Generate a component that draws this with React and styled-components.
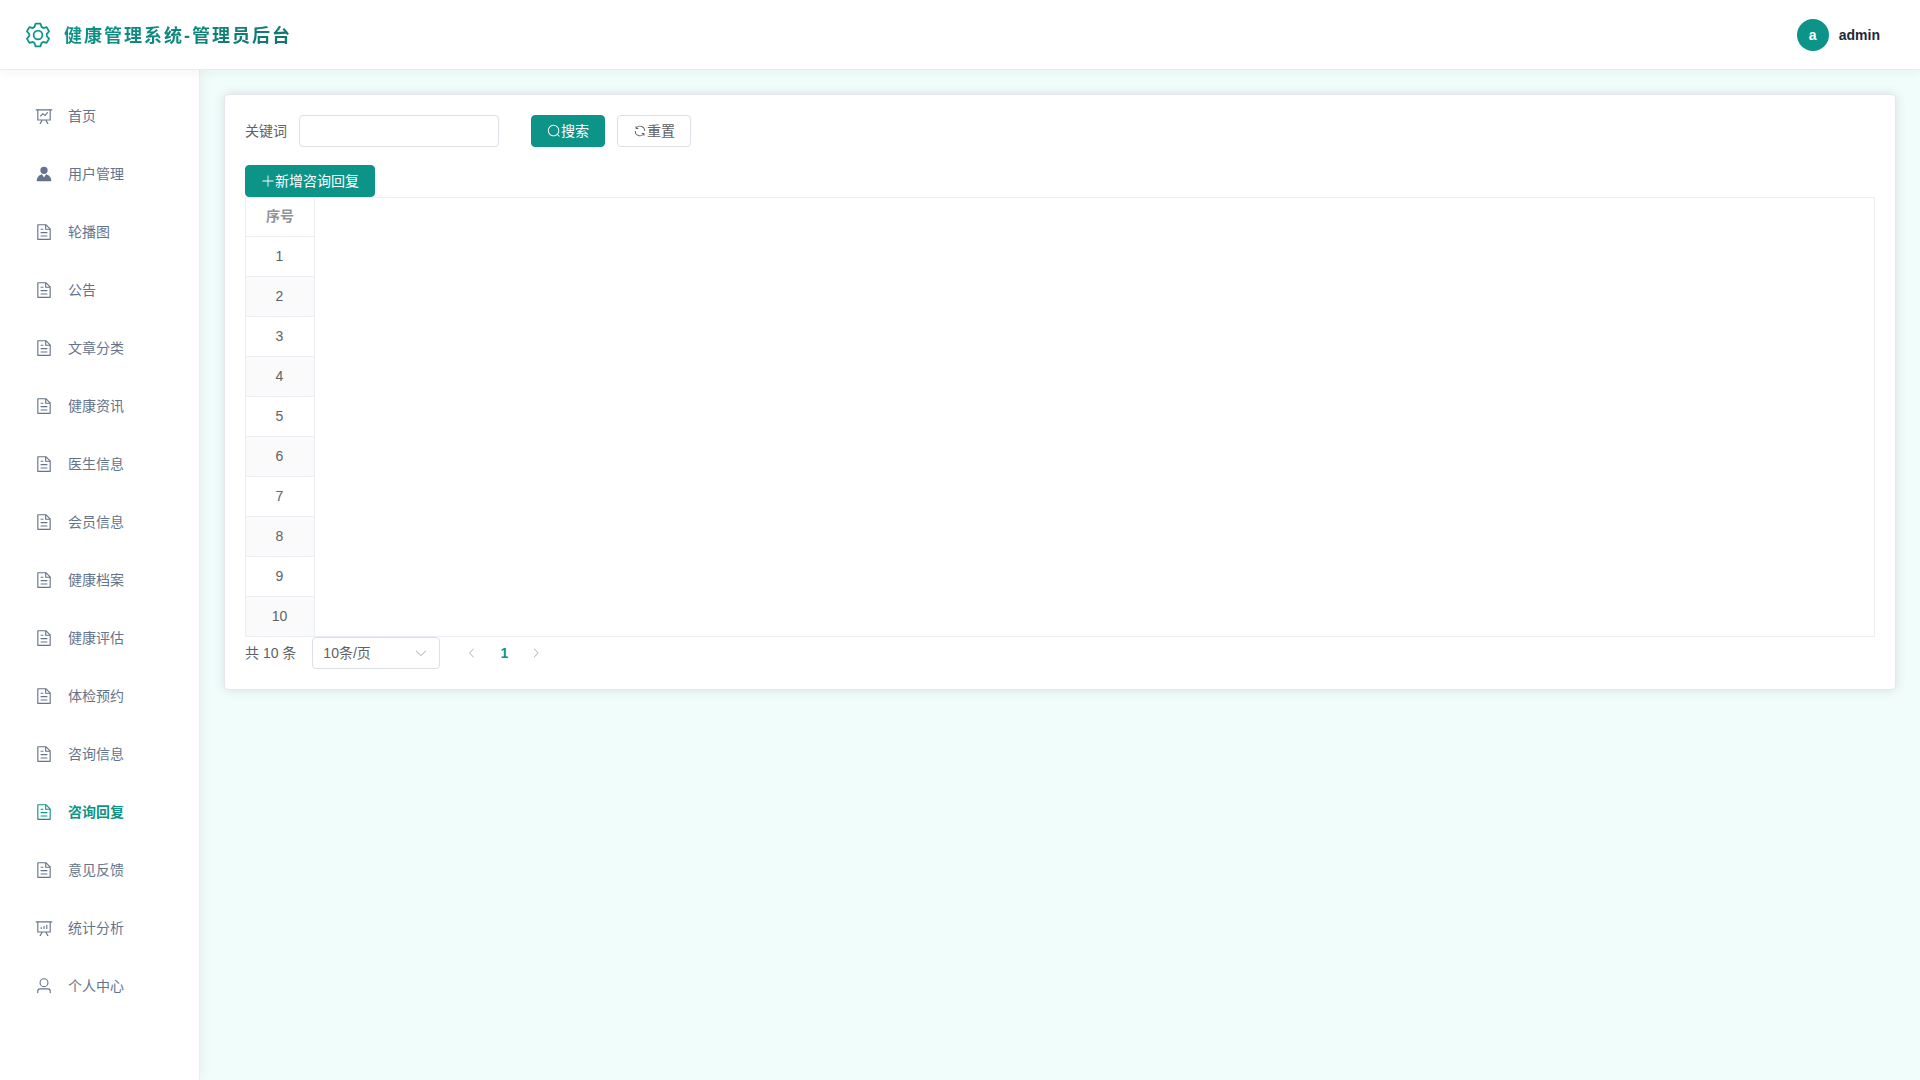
import React, { useState } from "react";
import styled, { createGlobalStyle } from "styled-components";

const GlobalStyle = createGlobalStyle`
  *, *::before, *::after { box-sizing: border-box; }
  body {
    margin: 0;
    font-family: "Liberation Sans", "Noto Sans CJK SC", sans-serif;
    font-size: 14px;
    line-height: 20px;
    color: #606266;
    background: #f0fdfa;
  }
  button, input, select { font: inherit; color: inherit; }
`;

const icons = {
  setting:
    "M600.704 64a32 32 0 0 1 30.464 22.208l35.2 109.376c14.784 7.232 28.928 15.36 42.432 24.512l112.384-24.192a32 32 0 0 1 34.432 15.36L944.32 364.8a32 32 0 0 1-4.032 37.504l-77.12 85.12a357.12 357.12 0 0 1 0 49.024l77.12 85.248a32 32 0 0 1 4.032 37.504l-88.704 153.6a32 32 0 0 1-34.432 15.296L708.8 803.904c-13.44 9.088-27.648 17.28-42.368 24.512l-35.264 109.376A32 32 0 0 1 600.704 960H423.296a32 32 0 0 1-30.464-22.208L357.696 828.48a351.616 351.616 0 0 1-42.56-24.64l-112.32 24.256a32 32 0 0 1-34.432-15.36L79.68 659.2a32 32 0 0 1 4.032-37.504l77.12-85.248a357.12 357.12 0 0 1 0-48.896l-77.12-85.248A32 32 0 0 1 79.68 364.8l88.704-153.6a32 32 0 0 1 34.432-15.296l112.32 24.256c13.568-9.152 27.776-17.408 42.56-24.64l35.2-109.312A32 32 0 0 1 423.232 64H600.64zm-23.424 64H446.72l-36.352 113.088-24.512 11.968a294.113 294.113 0 0 0-34.816 20.096l-22.656 15.36-116.224-25.088-65.28 113.152 79.68 88.192-1.92 27.136a293.12 293.12 0 0 0 0 40.192l1.92 27.136-79.808 88.192 65.344 113.152 116.224-25.024 22.656 15.296a294.113 294.113 0 0 0 34.816 20.096l24.512 11.968L446.72 896h130.688l36.48-113.152 24.448-11.904a288.282 288.282 0 0 0 34.752-20.096l22.592-15.296 116.288 25.024 65.28-113.152-79.744-88.192 1.92-27.136a293.12 293.12 0 0 0 0-40.256l-1.92-27.136 79.808-88.128-65.344-113.152-116.288 24.96-22.592-15.232a287.616 287.616 0 0 0-34.752-20.096l-24.448-11.904L577.344 128zM512 320a192 192 0 1 1 0 384 192 192 0 0 1 0-384zm0 64a128 128 0 1 0 0 256 128 128 0 0 0 0-256z",
  dataLine:
    "M359.168 768H160a32 32 0 0 1-32-32V192H64a32 32 0 0 1 0-64h896a32 32 0 1 1 0 64h-64v544a32 32 0 0 1-32 32H665.216l110.848 192h-74.88L590.336 768H433.664L322.816 960h-74.88l110.848-192zM832 192H192v512h640V192zM342.656 534.656a32 32 0 1 1-45.312-45.312L444.992 341.76l125.44 94.08L679.04 300.032a32 32 0 1 1 49.92 39.936L581.632 524.224 451.008 426.24 342.656 534.592z",
  avatar:
    "M628.736 528.896A416 416 0 0 1 928 928H96a415.872 415.872 0 0 1 299.264-399.104L512 704l116.736-175.104zM720 304a208 208 0 1 1-416 0 208 208 0 0 1 416 0z",
  document:
    "M832 384H576V128H192v768h640V384zm-26.496-64L640 154.496V320h165.504zM160 64h480l256 256v608a32 32 0 0 1-32 32H160a32 32 0 0 1-32-32V96a32 32 0 0 1 32-32zm160 448h384v64H320v-64zm0-192h160v64H320v-64zm0 384h384v64H320v-64z",
  dataAnalysis:
    "m665.216 768 110.848 192h-74.88L590.336 768H433.6L322.752 960H247.936l110.848-192H160a32 32 0 0 1-32-32V192H64a32 32 0 0 1 0-64h896a32 32 0 1 1 0 64h-64v544a32 32 0 0 1-32 32H665.216zM832 192H192v512h640V192zM352 448a32 32 0 0 1 32 32v64a32 32 0 0 1-64 0v-64a32 32 0 0 1 32-32zm160-64a32 32 0 0 1 32 32v128a32 32 0 0 1-64 0V416a32 32 0 0 1 32-32zm160-64a32 32 0 0 1 32 32v192a32 32 0 1 1-64 0V352a32 32 0 0 1 32-32z",
  user:
    "M512 512a192 192 0 1 0 0-384 192 192 0 0 0 0 384zm0 64a256 256 0 1 1 0-512 256 256 0 0 1 0 512zm320 320v-96a96 96 0 0 0-96-96H288a96 96 0 0 0-96 96v96a32 32 0 1 1-64 0v-96a160 160 0 0 1 160-160h448a160 160 0 0 1 160 160v96a32 32 0 1 1-64 0z",
  search:
    "m795.904 750.72 124.992 124.928a32 32 0 0 1-45.248 45.248L750.656 795.904a416 416 0 1 1 45.248-45.248zM480 832a352 352 0 1 0 0-704 352 352 0 0 0 0 704z",
  refresh:
    "M771.776 794.88A384 384 0 0 1 128 512h64a320 320 0 0 0 555.712 216.448H654.72a32 32 0 1 1 0-64h149.056a32 32 0 0 1 32 32v148.928a32 32 0 1 1-64 0v-50.56zM276.288 295.616h92.992a32 32 0 0 1 0 64H220.16a32 32 0 0 1-32-32V178.56a32 32 0 0 1 64 0v50.56A384 384 0 0 1 896.128 512h-64a320 320 0 0 0-555.776-216.384z",
  plus:
    "M480 480V128a32 32 0 0 1 64 0v352h352a32 32 0 1 1 0 64H544v352a32 32 0 1 1-64 0V544H128a32 32 0 0 1 0-64h352z",
  arrowDown:
    "M831.872 340.864 512 652.672 192.128 340.864a30.592 30.592 0 0 0-42.752 0 29.12 29.12 0 0 0 0 41.6L489.664 714.24a32 32 0 0 0 44.672 0l340.288-331.712a29.12 29.12 0 0 0 0-41.728 30.592 30.592 0 0 0-42.752 0z",
  arrowLeft:
    "M609.408 149.376 277.76 489.6a32 32 0 0 0 0 44.672l331.648 340.352a29.12 29.12 0 0 0 41.728 0 30.592 30.592 0 0 0 0-42.752L339.264 511.936l311.872-319.872a30.592 30.592 0 0 0 0-42.688 29.12 29.12 0 0 0-41.728 0z",
  arrowRight:
    "M340.864 149.312a30.592 30.592 0 0 0 0 42.752L652.736 512 340.864 831.872a30.592 30.592 0 0 0 0 42.752 29.12 29.12 0 0 0 41.728 0L714.24 534.336a32 32 0 0 0 0-44.672L382.592 149.376a29.12 29.12 0 0 0-41.728 0z",
};

const Svg = styled.svg`
  display: block;
  flex: none;
  width: ${(p) => p.$size}px;
  height: ${(p) => p.$size}px;
  fill: currentColor;
`;

const Icon = ({ name, size = 14 }) => (
  <Svg viewBox="0 0 1024 1024" $size={size} aria-hidden="true">
    <path d={icons[name]} />
  </Svg>
);

const Page = styled.div`
  display: flex;
  flex-direction: column;
  min-height: 100vh;
`;

const Header = styled.header`
  position: relative;
  z-index: 2;
  display: flex;
  align-items: center;
  justify-content: space-between;
  height: 70px;
  padding: 0 40px 0 24px;
  background: #fff;
  border-bottom: 1px solid #ccfbf1;
  box-shadow: 0 2px 12px rgba(0, 0, 0, 0.05);
`;

const Brand = styled.div`
  display: flex;
  align-items: center;
  gap: 12px;
  color: #0d9488;
`;

const Title = styled.h1`
  margin: 0;
  padding-top: 2px;
  font-size: 18px;
  line-height: 26px;
  font-weight: 700;
  letter-spacing: 2px;
  background: linear-gradient(135deg, #0d9488, #0f766e);
  background-clip: text;
  color: transparent;
`;

const Account = styled.div`
  display: flex;
  align-items: center;
  gap: 10px;
  font-weight: 700;
  color: #1e293b;
`;

const Avatar = styled.span`
  display: grid;
  place-items: center;
  width: 32px;
  height: 32px;
  border-radius: 50%;
  background: #0d9488;
  color: #fff;
`;

const Body = styled.div`
  display: flex;
  flex: 1;
`;

const Sidebar = styled.nav`
  position: relative;
  z-index: 1;
  flex: none;
  width: 200px;
  padding: 21px 12px;
  background: #fff;
  border-right: 1px solid #ccfbf1;
  box-shadow: 2px 0 12px rgba(0, 0, 0, 0.05);
`;

const Menu = styled.ul`
  display: flex;
  flex-direction: column;
  gap: 8px;
  margin: 0;
  padding: 0;
  list-style: none;
`;

const MenuLink = styled.a`
  display: flex;
  align-items: center;
  gap: 15px;
  height: 50px;
  padding: 0 23px;
  color: ${(p) => (p.$active ? "#0d9488" : "#64748b")};
  font-weight: ${(p) => (p.$active ? 700 : 400)};
  text-decoration: none;
`;

const Main = styled.main`
  flex: 1;
  min-width: 0;
  padding: 24px;
`;

const Card = styled.section`
  padding: 20px;
  background: #fff;
  border: 1px solid #e4e7ed;
  border-radius: 4px;
  box-shadow: 0 0 12px rgba(0, 0, 0, 0.12);
`;

const SearchForm = styled.form`
  display: flex;
  align-items: center;
  gap: 32px;
  margin-bottom: 18px;
`;

const Field = styled.div`
  display: flex;
  align-items: center;
  gap: 12px;
`;

const TextInput = styled.input`
  width: 200px;
  height: 32px;
  padding: 0 11px;
  background: #fff;
  border: 1px solid #dcdfe6;
  border-radius: 4px;
`;

const Button = styled.button`
  display: inline-flex;
  align-items: center;
  justify-content: center;
  height: 32px;
  padding: 0 15px;
  line-height: 14px;
  background: ${(p) => (p.$primary ? "#0d9488" : "#fff")};
  color: ${(p) => (p.$primary ? "#fff" : "#606266")};
  border: 1px solid ${(p) => (p.$primary ? "#0d9488" : "#dcdfe6")};
  border-radius: 4px;
  cursor: pointer;
`;

const Toolbar = styled.div`
  display: flex;
`;

const TableFrame = styled.div`
  border: 1px solid #ebeef5;
`;

const Table = styled.table`
  width: 69px;
  border-collapse: separate;
  border-spacing: 0;
  text-align: center;

  th, td {
    height: 40px;
    padding: 0 1px 0 0;
    line-height: 23px;
    border-right: 1px solid #ebeef5;
    border-bottom: 1px solid #ebeef5;
  }
  th {
    height: 39px;
    padding: 0 0 2px;
    color: #909399;
    font-weight: 700;
  }
  tbody tr:nth-child(even) td { background: #fafafa; }
  tbody tr:last-child td { height: 39px; border-bottom: 0; }
`;

const Pagination = styled.div`
  display: flex;
  align-items: center;
  gap: 16px;
`;

const SelectBox = styled.div`
  position: relative;
  display: flex;
  align-items: center;
  color: #606266;

  svg {
    position: absolute;
    right: 12px;
    color: #a8abb2;
    pointer-events: none;
  }
`;

const Select = styled.select`
  appearance: none;
  width: 128px;
  height: 32px;
  padding: 0 32px 0 10px;
  background: #fff;
  border: 1px solid #dcdfe6;
  border-radius: 4px;
`;

const Pager = styled.div`
  display: flex;
`;

const PageButton = styled.button`
  display: grid;
  place-items: center;
  width: 32px;
  height: 32px;
  padding: 0;
  border: 0;
  background: none;
  color: ${(p) => (p.$current ? "#0d9488" : "#a8abb2")};
  font-weight: ${(p) => (p.$current ? 700 : 400)};
`;

const menu = [
  ["首页", "dataLine"],
  ["用户管理", "avatar"],
  ["轮播图", "document"],
  ["公告", "document"],
  ["文章分类", "document"],
  ["健康资讯", "document"],
  ["医生信息", "document"],
  ["会员信息", "document"],
  ["健康档案", "document"],
  ["健康评估", "document"],
  ["体检预约", "document"],
  ["咨询信息", "document"],
  ["咨询回复", "document"],
  ["意见反馈", "document"],
  ["统计分析", "dataAnalysis"],
  ["个人中心", "user"],
];

const rows = Array.from({ length: 10 }, (_, i) => i + 1);

export default function App() {
  const [active, setActive] = useState("咨询回复");
  const [keyword, setKeyword] = useState("");

  return (
    <Page>
      <GlobalStyle />
      <Header>
        <Brand>
          <Icon name="setting" size={28} />
          <Title>健康管理系统-管理员后台</Title>
        </Brand>
        <Account>
          <Avatar>a</Avatar>
          <span>admin</span>
        </Account>
      </Header>
      <Body>
        <Sidebar>
          <Menu>
            {menu.map(([label, icon]) => (
              <li key={label}>
                <MenuLink
                  href="#"
                  $active={label === active}
                  aria-current={label === active ? "page" : undefined}
                  onClick={(e) => {
                    e.preventDefault();
                    setActive(label);
                  }}
                >
                  <Icon name={icon} size={18} />
                  <span>{label}</span>
                </MenuLink>
              </li>
            ))}
          </Menu>
        </Sidebar>
        <Main>
          <Card>
            <SearchForm onSubmit={(e) => e.preventDefault()}>
              <Field>
                <label htmlFor="keyword">关键词</label>
                <TextInput
                  id="keyword"
                  type="text"
                  value={keyword}
                  onChange={(e) => setKeyword(e.target.value)}
                />
              </Field>
              <Field>
                <Button type="submit" $primary>
                  <Icon name="search" />
                  <span>搜索</span>
                </Button>
                <Button type="button" onClick={() => setKeyword("")}>
                  <Icon name="refresh" />
                  <span>重置</span>
                </Button>
              </Field>
            </SearchForm>
            <Toolbar>
              <Button type="button" $primary>
                <Icon name="plus" />
                <span>新增咨询回复</span>
              </Button>
            </Toolbar>
            <TableFrame>
              <Table>
                <thead>
                  <tr>
                    <th scope="col">序号</th>
                  </tr>
                </thead>
                <tbody>
                  {rows.map((n) => (
                    <tr key={n}>
                      <td>{n}</td>
                    </tr>
                  ))}
                </tbody>
              </Table>
            </TableFrame>
            <Pagination>
              <span>共 10 条</span>
              <SelectBox>
                <Select aria-label="每页条数" defaultValue="10">
                  <option value="10">10条/页</option>
                </Select>
                <Icon name="arrowDown" />
              </SelectBox>
              <Pager>
                <PageButton type="button" disabled aria-label="上一页">
                  <Icon name="arrowLeft" size={12} />
                </PageButton>
                <PageButton type="button" $current aria-current="page">1</PageButton>
                <PageButton type="button" disabled aria-label="下一页">
                  <Icon name="arrowRight" size={12} />
                </PageButton>
              </Pager>
            </Pagination>
          </Card>
        </Main>
      </Body>
    </Page>
  );
}
